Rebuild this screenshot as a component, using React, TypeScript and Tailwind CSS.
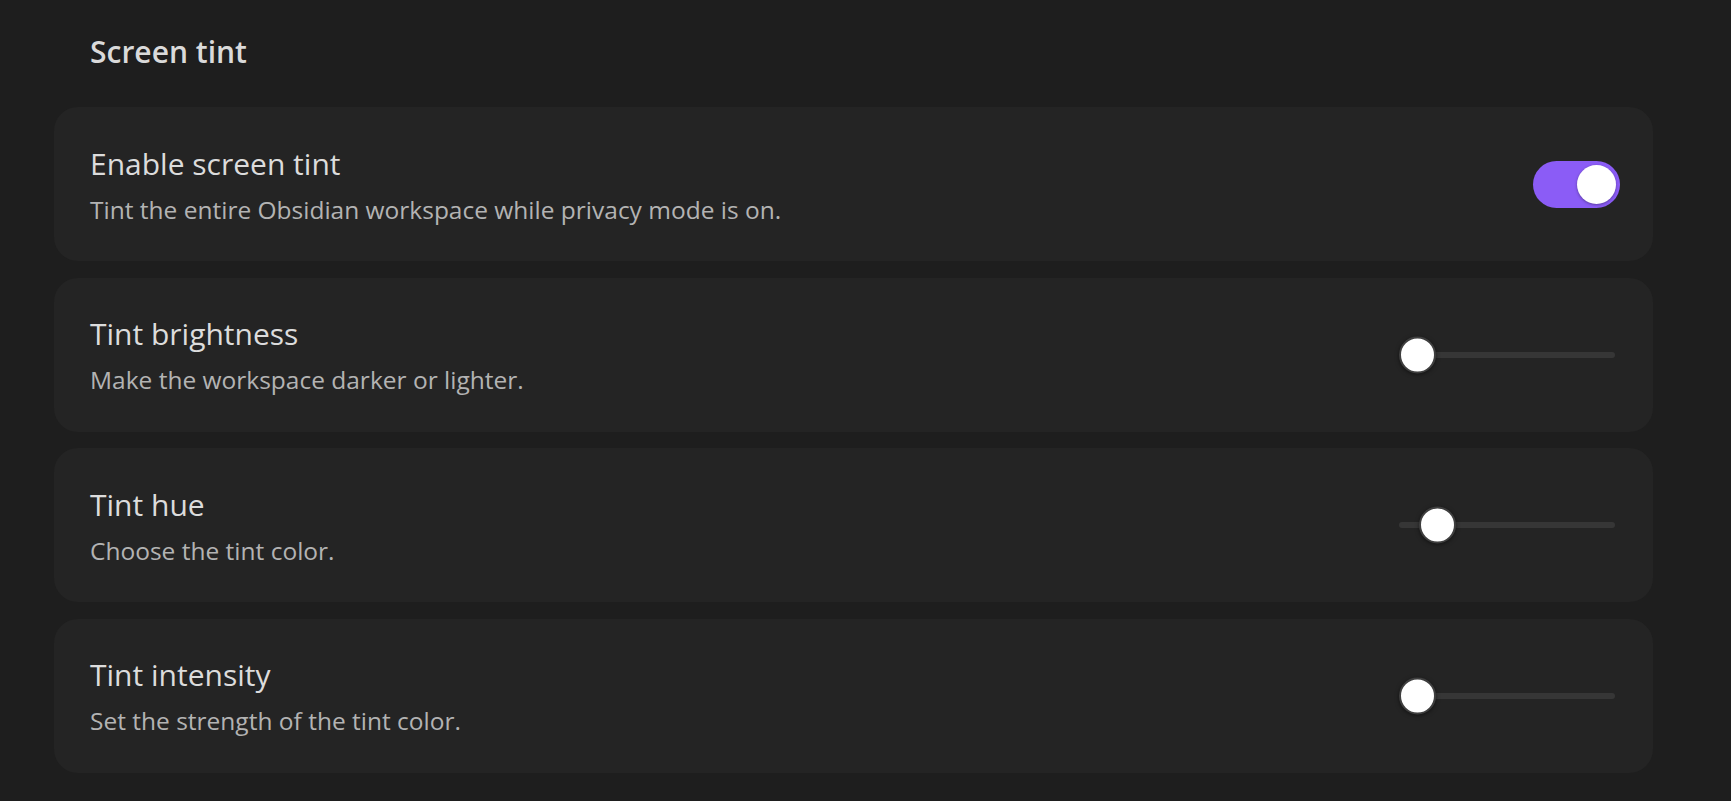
import React from "react";

function Toggle({ on }: { on: boolean }) {
  return (
    <div
      className={
        "relative h-[47px] w-[87px] shrink-0 rounded-full " +
        (on ? "bg-[#8b5cf6]" : "bg-[#3a3a3a]")
      }
    >
      <div
        className="absolute top-[4px] h-[39px] w-[39px] rounded-full bg-white shadow-[0_1px_3px_rgba(0,0,0,0.35)]"
        style={{ left: on ? 44 : 4 }}
      />
    </div>
  );
}

function Slider({ pct }: { pct: number }) {
  const trackW = 216;
  const thumb = 37;
  return (
    <div className="relative mr-[5px] flex h-[40px] w-[216px] shrink-0 items-center">
      <div className="h-[6px] w-full rounded-full bg-[#363636]" />
      <div
        className="absolute top-1/2 h-[37px] w-[37px] -translate-y-1/2 rounded-full border-[2px] border-[#3f3f3f] bg-white shadow-[0_1px_4px_rgba(0,0,0,0.5)]"
        style={{ left: pct * (trackW - thumb) }}
      />
    </div>
  );
}

function Card({
  name,
  desc,
  children,
}: {
  name: string;
  desc: string;
  children: React.ReactNode;
}) {
  return (
    <div className="flex h-[154px] items-center justify-between rounded-[24px] bg-[#242424] pl-[36px] pr-[33px]">
      <div className="pt-[1px]">
        <div className="text-[30px] leading-[40px] text-[#dcdcdc]">{name}</div>
        <div className="mt-[10px] text-[24.5px] leading-[32px] text-[#b3b3b3]">{desc}</div>
      </div>
      {children}
    </div>
  );
}

export default function App() {
  return (
    <div
      className="min-h-screen bg-[#1e1e1e] pl-[54px] pr-[78px] pt-[32px]"
      style={{ fontFamily: '"Open Sans", "Noto Sans", sans-serif' }}
    >
      <h2 className="pl-[36px] text-[30px] font-semibold leading-[40px] text-[#dadada]">
        Screen tint
      </h2>
      <div className="mt-[35px] flex flex-col gap-[16.5px]">
        <Card
          name="Enable screen tint"
          desc="Tint the entire Obsidian workspace while privacy mode is on."
        >
          <Toggle on={true} />
        </Card>
        <Card name="Tint brightness" desc="Make the workspace darker or lighter.">
          <Slider pct={0} />
        </Card>
        <Card name="Tint hue" desc="Choose the tint color.">
          <Slider pct={0.113} />
        </Card>
        <Card name="Tint intensity" desc="Set the strength of the tint color.">
          <Slider pct={0} />
        </Card>
      </div>
    </div>
  );
}
